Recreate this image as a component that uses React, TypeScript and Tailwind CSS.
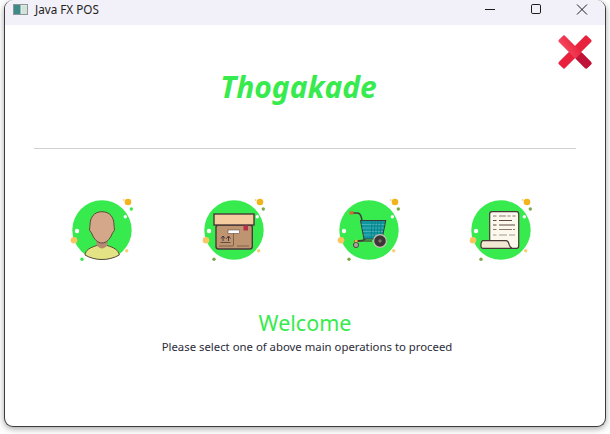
import React from "react";

function Dots({ tone }: { tone: string }) {
  return (
    <>
      <circle cx="26" cy="-28" r="3.3" fill="#f2b31c" />
      <circle cx="21.7" cy="-30" r="0.7" fill="#f2b31c" />
      <circle cx="29.3" cy="-21" r="1.7" fill={tone} />
      <circle cx="23.3" cy="-13.3" r="1.7" fill="#ffffff" />
      <circle cx="-25" cy="1" r="2.2" fill="#ffffff" />
      <circle cx="-28" cy="10.3" r="3.3" fill="#f9c762" />
      <circle cx="24.7" cy="20.7" r="1.7" fill="#f9cf73" />
      <circle cx="-20" cy="29.3" r="1.7" fill={tone} />
    </>
  );
}

function IconShell({ tone, className, children }: { tone: string; className?: string; children: React.ReactNode }) {
  return (
    <svg width="90" height="80" viewBox="-45 -40 90 80" className={className}>
      <circle cx="0" cy="0" r="29.7" fill="#37ea4e" />
      <Dots tone={tone} />
      {children}
    </svg>
  );
}

function PersonIcon({ className }: { className?: string }) {
  return (
    <IconShell tone="#37ea4e" className={className}>
      <path d="M-17 25 C-16.5 20 -12 17.5 -5 15.5 L5 15.5 C12 17.5 16.5 20 17.3 25 C12 28 6 29.5 0 29.5 C-6 29.5 -12 28 -17 25 Z" fill="#e3e285" stroke="#5c4a3a" strokeWidth="1" />
      <path d="M-5.5 9 L-5.5 15 C-2 19.5 2 19.5 5.5 15 L5.5 9 Z" fill="#b58a72" />
      <path d="M0 -18.3 C-8 -18.3 -12 -12.5 -12 -5 C-12 -3 -12.8 -1.5 -12.3 0.5 C-11.5 2 -10.5 2.5 -10 4 C-8 9.5 -4 13 0 13 C4 13 8 9.5 10 4 C10.5 2.5 11.5 2 12.3 0.5 C12.8 -1.5 12 -3 12 -5 C12 -12.5 8 -18.3 0 -18.3 Z" fill="#d4a68a" stroke="#5c4a3a" strokeWidth="1" />
    </IconShell>
  );
}

function BoxIcon({ className }: { className?: string }) {
  return (
    <IconShell tone="#7da84a" className={className}>
      <rect x="-18" y="-5" width="36.3" height="24" rx="2.5" fill="#bf9470" stroke="#4a3838" strokeWidth="1.4" />
      <rect x="-20" y="-16" width="40" height="11" fill="#f5cba0" stroke="#4a3838" strokeWidth="1.4" />
      <rect x="-6" y="0" width="11.5" height="3.4" fill="#ffffff" stroke="#4a3838" strokeWidth="0.5" />
      <rect x="9.5" y="-4.5" width="4.5" height="5" fill="#b8304a" />
      <path d="M-0.5 3.5 V16 M-15 16 H-1 M3 16 H15" stroke="#6e5546" strokeWidth="0.8" fill="none" />
      <path d="M-11 11 V6.5 M-13 8.5 L-11 6 L-9 8.5 M-5.5 11 V6.5 M-7.5 8.5 L-5.5 6 L-3.5 8.5" stroke="#4a3838" strokeWidth="1" fill="none" />
      <path d="M-13.5 12.5 H-3.5" stroke="#4a3838" strokeWidth="0.8" />
    </IconShell>
  );
}

function CartIcon({ className }: { className?: string }) {
  return (
    <IconShell tone="#7da84a" className={className}>
      <path d="M-18 -17 H-12 C-8.5 -17 -8 -14 -7.5 -12 L-4 9 C-5 10.5 -8 11 -13 11" stroke="#4a3838" strokeWidth="1.5" fill="none" />
      <rect x="-19.5" y="-18.7" width="4" height="3.2" fill="#d9663a" />
      <path d="M-8.5 -9.5 H16.7 L13 9 H-5 Z" fill="#0f97a0" stroke="#3f3a3a" strokeWidth="1.1" />
      <path d="M-7.5 -5.5 H15.5 M-7 -2 H15 M-6 1.5 H14 M-5.5 5 H13.5" stroke="#5cbcc0" strokeWidth="0.7" />
      <path d="M3 -9 L2 9 M6 -9 L5 9 M9 -9 L8 9 M12 -9 L11 9" stroke="#0b6e78" strokeWidth="0.6" />
      <path d="M-15 11 H3" stroke="#4a3838" strokeWidth="1.2" />
      <circle cx="-13" cy="15" r="2.6" fill="#a9a59c" stroke="#4a3838" strokeWidth="0.9" />
      <rect x="-14.3" y="9.8" width="2.8" height="2.4" fill="#efb43a" />
      <circle cx="11" cy="11" r="6.4" fill="#3b3535" stroke="#c9c2b8" strokeWidth="1.2" />
      <path d="M9 11 H13 M11 9 V13" stroke="#b5aea5" strokeWidth="0.6" />
    </IconShell>
  );
}

function ReceiptIcon({ className }: { className?: string }) {
  return (
    <IconShell tone="#7da84a" className={className}>
      <path d="M-11.3 11 V-16 C-11.3 -17.5 -10.3 -18.3 -9 -18.3 H15.5 C17 -18.3 17.7 -17.5 17.7 -16 V16 C17.7 17.5 17 18.3 15.5 18.3 H9 L-11.3 11 Z" fill="#fdf8ee" stroke="#4a3838" strokeWidth="1.2" />
      <path d="M-8 -14 H-4.5 M-2 -14 H5 M6.5 -14 H9.5 M11.5 -14 H14.5" stroke="#8a7a6c" strokeWidth="1.1" fill="none" />
      <path d="M-8 -9.5 H-4.5 M-2 -9.5 H11" stroke="#5f4a3e" strokeWidth="1.1" fill="none" />
      <path d="M-8 -5 H-4.5 M-2 -5 H14" stroke="#5f4a3e" strokeWidth="1.1" fill="none" />
      <path d="M-8 -0.5 H-4.5 M-2 -0.5 H11 M12 -0.5 H14" stroke="#8a7a6c" strokeWidth="1.1" fill="none" />
      <path d="M-8 5 H-4.5 M-2 5 H6 M8 5 H14" stroke="#a89a8c" strokeWidth="1.1" fill="none" />
      <path d="M-18 10.7 H5 C7 10.7 7.5 12 8 14 C8.5 16.5 9.5 17.7 11 18.3 H-18 C-20 18.3 -20.2 17 -20 14 C-19.8 12 -19.5 10.7 -18 10.7 Z" fill="#f1e7d2" stroke="#4a3838" strokeWidth="1.2" />
    </IconShell>
  );
}

function CloseIcon() {
  return (
    <svg width="36" height="36" viewBox="0 0 36 36" className="absolute right-[12px] top-[34px]">
      <defs>
        <linearGradient id="xr" x1="0" y1="0" x2="1" y2="1">
          <stop offset="0" stopColor="#f5485f" />
          <stop offset="1" stopColor="#e61e38" />
        </linearGradient>
      </defs>
      <rect x="13.6" y="-2" width="8.8" height="40" rx="1.6" fill="#e8223d" transform="rotate(45 18 18)" />
      <rect x="13.6" y="-2" width="8.8" height="40" rx="1.6" fill="url(#xr)" transform="rotate(-45 18 18)" />
      <path d="M18.6 24.6 L24.6 18.6 L33.5 27.5 C34.8 28.8 34.8 29.8 33.5 31 L31 33.5 C29.8 34.8 28.8 34.8 27.5 33.5 Z" fill="#bf1339" />
    </svg>
  );
}

function AppIcon() {
  return (
    <svg width="15" height="11" viewBox="0 0 15 11" className="shrink-0">
      <rect x="0.5" y="0.5" width="14" height="10" fill="#e4e9ec" stroke="#8d9599" />
      <rect x="1" y="1" width="6.5" height="9" fill="#3d8a86" />
      <rect x="9" y="2" width="5" height="8" fill="#cfe3d7" />
    </svg>
  );
}

function WindowButtons() {
  return (
    <div className="ml-auto flex h-full items-start">
      <svg width="46" height="25" viewBox="0 0 46 25" className="block">
        <path d="M18 9.5 H28" stroke="#1c1c1c" strokeWidth="1" />
      </svg>
      <svg width="46" height="25" viewBox="0 0 46 25" className="block">
        <rect x="18.5" y="4.5" width="9" height="9" rx="1.3" fill="none" stroke="#1c1c1c" strokeWidth="1" />
      </svg>
      <svg width="46" height="25" viewBox="0 0 46 25" className="block">
        <path d="M18 4.5 L28 14.5 M28 4.5 L18 14.5" stroke="#1c1c1c" strokeWidth="1" />
      </svg>
    </div>
  );
}

export default function App() {
  return (
    <div className="h-[434px] w-[610px] overflow-hidden bg-white pl-[4px]" style={{ fontFamily: '"Noto Sans", sans-serif' }}>
      <div className="relative flex h-[427px] w-[602px] flex-col overflow-hidden rounded-[9px] border-x border-b border-[#3c3c3c] bg-white shadow-[0_2px_6px_rgba(0,0,0,0.35)]">
        <div className="flex h-[25px] shrink-0 items-start bg-[#f2f0f8]">
          <div className="flex h-[19px] items-center pl-[8px]">
            <AppIcon />
            <span className="ml-[7px] text-[11.7px] leading-none text-[#222222]">Java FX POS</span>
          </div>
          <WindowButtons />
        </div>

        <CloseIcon />

        <div className="flex flex-col">
          <h1 className="mt-[41px] pr-[13px] text-center text-[30px] font-bold italic leading-[42px] text-[#37ea4e]">
            Thogakade
          </h1>
          <div className="mx-[29px] mt-[40px] h-px bg-[#d0d0d0]" />
          <div className="ml-[52px] mt-[41px] flex">
            <PersonIcon className="block" />
            <BoxIcon className="ml-[42px] block" />
            <CartIcon className="ml-[45px] block" />
            <ReceiptIcon className="ml-[42px] block" />
          </div>
          <div className="mt-[39px] text-center text-[21.5px] font-normal leading-[28px] text-[#37ea4e]">
            Welcome
          </div>
          <div className="mt-[2px] pl-[4px] text-center text-[11.35px] leading-[16px] text-[#2c2c3a]">
            Please select one of above main operations to proceed
          </div>
        </div>
      </div>
    </div>
  );
}
